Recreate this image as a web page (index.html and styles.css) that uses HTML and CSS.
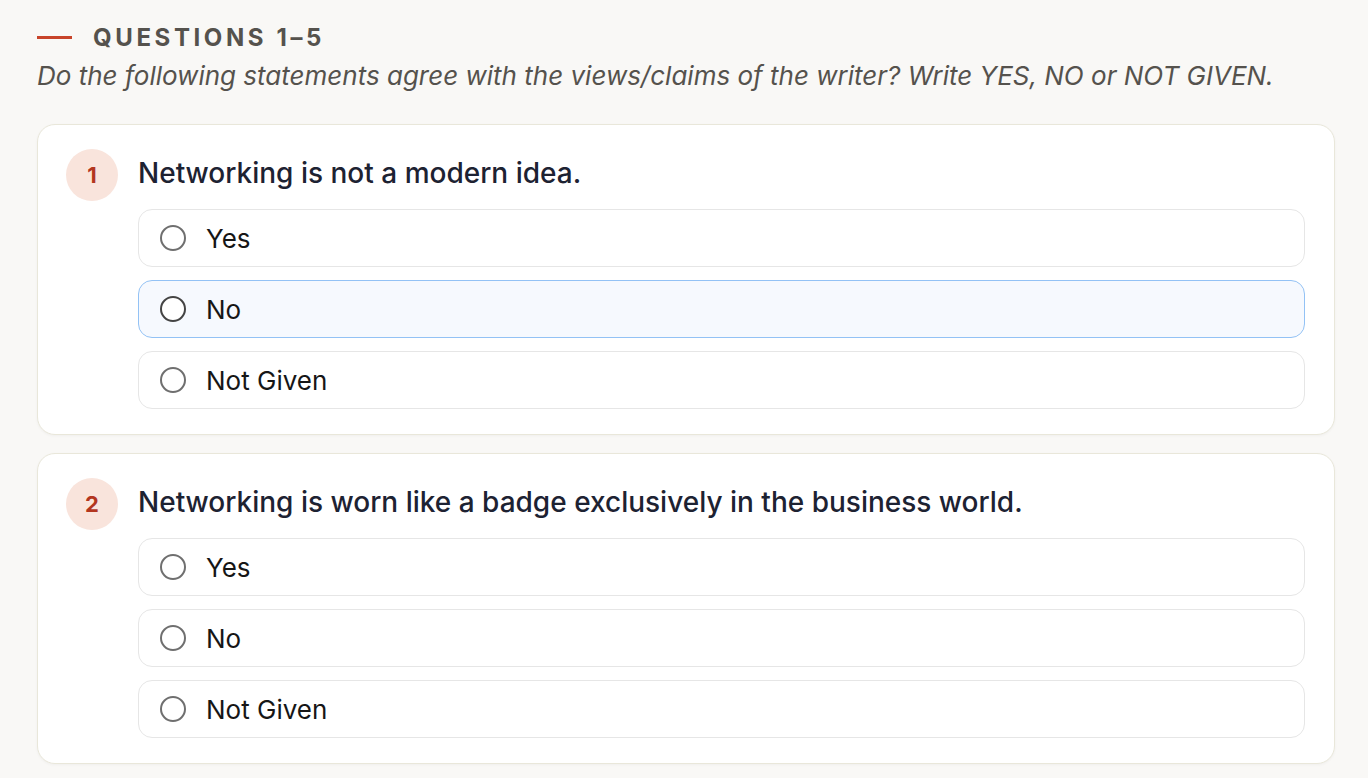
FILE: index.html
```html
<!DOCTYPE html>
<html>
<head>
    <title>Questions 1–5</title>
    <link rel="stylesheet" href="styles.css">
</head>
<body>
    <div class="section">
        <div class="section-head">
            <span class="dash"></span>
            <h2>Questions 1–5</h2>
        </div>
        <p class="instructions">Do the following statements agree with the views/claims of the writer? Write YES, NO or NOT GIVEN.</p>

        <div class="question">
            <div class="question-row">
                <span class="badge">1</span>
                <p class="question-text">Networking is not a modern idea.</p>
            </div>
            <div class="options">
                <label class="option"><span class="radio"></span>Yes</label>
                <label class="option active"><span class="radio"></span>No</label>
                <label class="option"><span class="radio"></span>Not Given</label>
            </div>
        </div>

        <div class="question">
            <div class="question-row">
                <span class="badge">2</span>
                <p class="question-text">Networking is worn like a badge exclusively in the business world.</p>
            </div>
            <div class="options">
                <label class="option"><span class="radio"></span>Yes</label>
                <label class="option"><span class="radio"></span>No</label>
                <label class="option"><span class="radio"></span>Not Given</label>
            </div>
        </div>
    </div>
</body>
</html>
```

FILE: styles.css
```css
body {
    font-family: Inter, "Noto Sans", sans-serif;
    background-color: #f9f8f6;
    margin: 0;
}
.section {
    padding: 23px 33px 0 37px;
}
.section-head {
    display: flex;
    align-items: center;
    gap: 21px;
    height: 28px;
}
.dash {
    width: 35px;
    height: 3px;
    background-color: #c8442a;
}
h2 {
    margin: 0;
    font-size: 24px;
    font-weight: 700;
    letter-spacing: 3.6px;
    text-transform: uppercase;
    color: #55524d;
}
.instructions {
    margin: 9px 0 32px;
    font-size: 26px;
    line-height: 32px;
    font-style: italic;
    color: #55524d;
}
.question {
    background-color: white;
    border: 1.5px solid #e9e7da;
    border-radius: 18px;
    box-shadow: 0 1px 3px rgba(0, 0, 0, 0.04);
    padding: 24px 29px 25px 28px;
    margin-bottom: 18px;
}
.question-row {
    display: flex;
    align-items: center;
    gap: 20px;
    margin-bottom: 8px;
}
.badge {
    width: 52px;
    height: 52px;
    border-radius: 50%;
    background-color: #f9e4dc;
    color: #b3361f;
    font-size: 22px;
    font-weight: 700;
    display: flex;
    align-items: center;
    justify-content: center;
    flex-shrink: 0;
}
.question-text {
    margin: 0 0 4px;
    font-size: 28px;
    font-weight: 500;
    color: #1d2232;
}
.options {
    display: flex;
    flex-direction: column;
    gap: 13px;
    margin-left: 72px;
}
.option {
    display: flex;
    align-items: center;
    gap: 20px;
    box-sizing: border-box;
    height: 58px;
    padding: 0 21px;
    border: 1.5px solid #e6e6e6;
    border-radius: 14px;
    font-size: 26px;
    color: #161616;
}
.option.active {
    border-color: #93c2f5;
    background-color: #f6f9fe;
}
.radio {
    width: 22px;
    height: 22px;
    border: 2px solid #6f6f6f;
    border-radius: 50%;
    background-color: white;
}
.option.active .radio {
    border-color: #444;
}
```
